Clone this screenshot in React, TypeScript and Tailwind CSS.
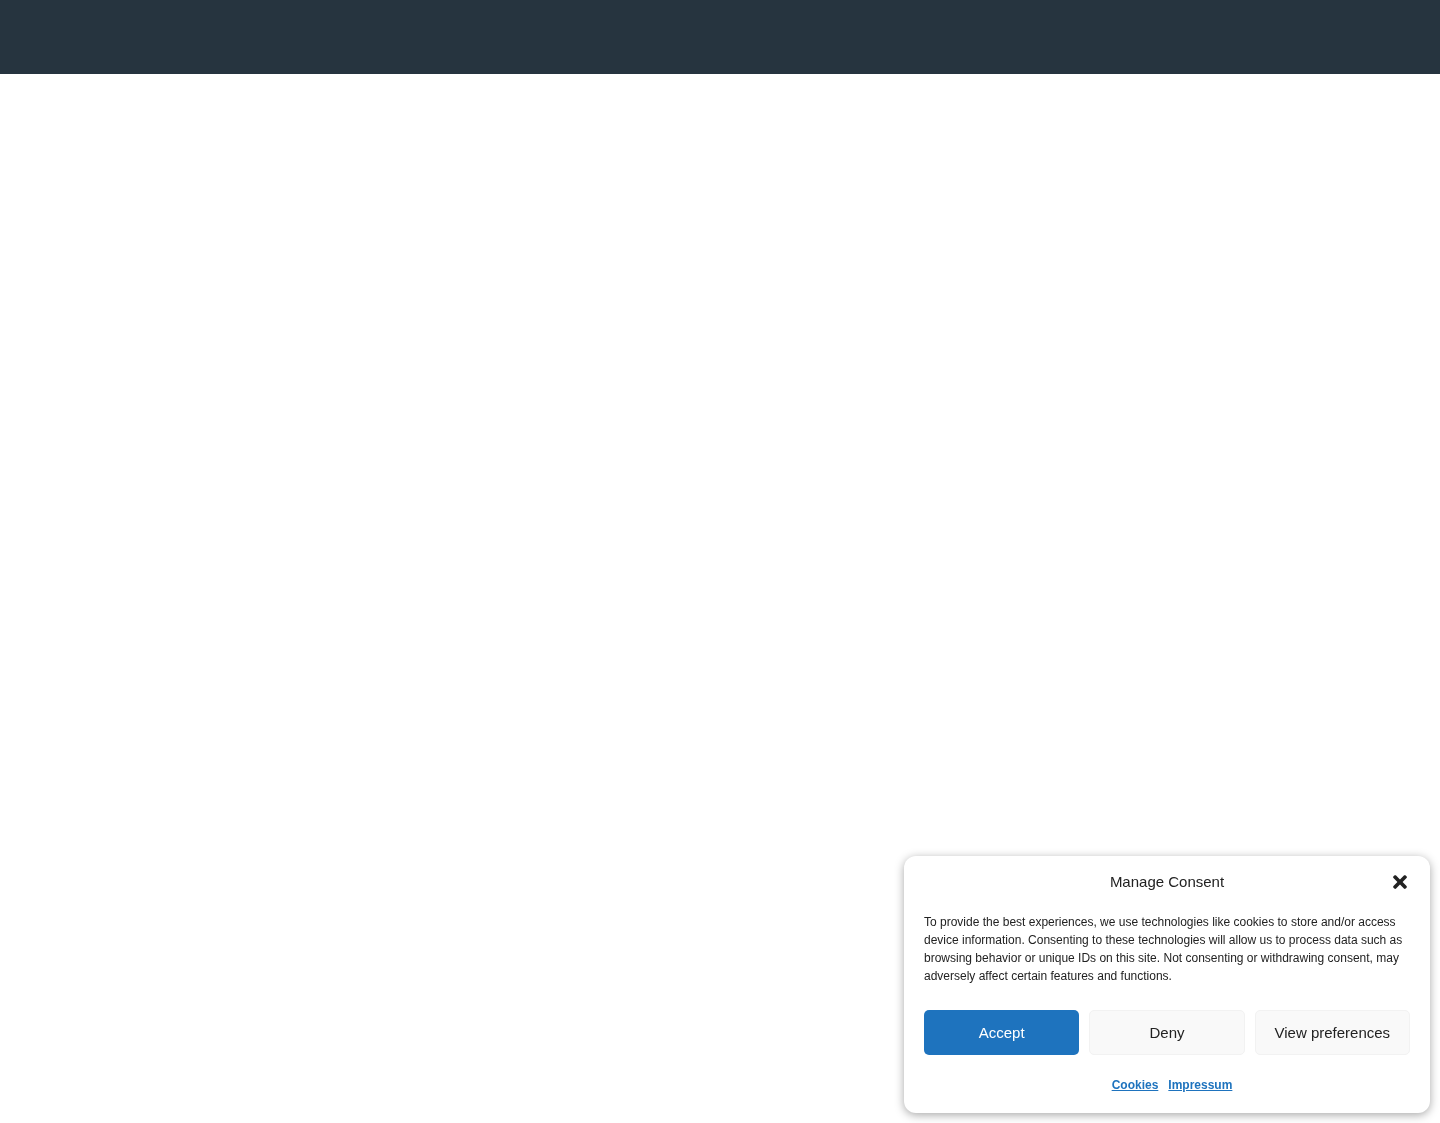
import { FaTimes } from "react-icons/fa";

export default function App() {
  return (
    <div className="min-h-[1123px] bg-white font-['Liberation_Sans',Arial,sans-serif]">
      <header className="h-[74px] w-full bg-[#26343f]" />

      <div className="fixed right-[10px] bottom-[10px] w-[526px] rounded-[12px] bg-white px-5 pt-[16px] pb-5 shadow-[0_2px_10px_rgba(0,0,0,0.35)] text-[#222]">
        <div className="relative flex h-5 items-center justify-center">
          <h2 className="text-[15px] leading-5">Manage Consent</h2>
          <button className="absolute right-0 top-0 flex h-5 w-5 items-center justify-center text-[#222]">
            <FaTimes size={20} />
          </button>
        </div>

        <p className="mt-[21px] text-[12px] leading-[18px] text-[#222]">
          To provide the best experiences, we use technologies like cookies to store and/or access
          device information. Consenting to these technologies will allow us to process data such as
          browsing behavior or unique IDs on this site. Not consenting or withdrawing consent, may
          adversely affect certain features and functions.
        </p>

        <div className="mt-[25px] grid grid-cols-3 gap-[10px]">
          <button className="h-[45px] rounded-[5px] bg-[#1e73be] pt-px text-[15px] text-white">
            Accept
          </button>
          <button className="h-[45px] rounded-[5px] border border-[#f2f2f2] bg-[#f9f9f9] pt-px text-[15px] text-[#222]">
            Deny
          </button>
          <button className="h-[45px] rounded-[5px] border border-[#f2f2f2] bg-[#f9f9f9] pt-px text-[15px] text-[#222]">
            View preferences
          </button>
        </div>

        <div className="mt-[22px] flex h-4 items-center justify-center gap-[10px] pl-[10px] text-[12px] font-bold leading-4 text-[#1e73be]">
          <a className="underline">Cookies</a>
          <a className="underline">Impressum</a>
        </div>
      </div>
    </div>
  );
}
